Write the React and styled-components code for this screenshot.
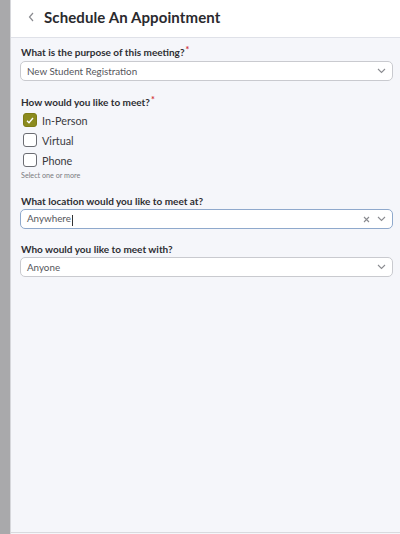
import React from "react";
import styled, { createGlobalStyle } from "styled-components";

const Global = createGlobalStyle`
  html, body { margin: 0; padding: 0; height: 100%; }
  body { font-family: Lato, "Open Sans", sans-serif; background: #f5f6fa; }
  #root { height: 100%; }
`;

const Page = styled.div`
  display: flex;
  height: 534px;
  width: 400px;
  overflow: hidden;
`;

const Strip = styled.div`
  width: 10px;
  flex: none;
  background: #a9a9ab;
  border-right: 1px solid #d6d7db;
`;

const Panel = styled.div`
  flex: 1;
  display: flex;
  flex-direction: column;
  background: #f5f6fa;
  border-bottom: 1px solid #d9dade;
  box-sizing: border-box;
  height: 533px;
`;

const Header = styled.div`
  height: 38px;
  box-sizing: border-box;
  background: #fff;
  border-bottom: 1px solid #dfe1e8;
  display: flex;
  align-items: center;
  padding: 0 0 3px 17px;
  gap: 9px;
`;

const Title = styled.h1`
  margin: 0;
  font-size: 15px;
  font-weight: 700;
  color: #2a2a2e;
  letter-spacing: 0.1px;
`;

const Body = styled.div`
  padding: 8px 7px 0 9px;
  display: flex;
  flex-direction: column;
`;

const Field = styled.div`
  display: flex;
  flex-direction: column;
  margin-bottom: ${(p) => p.$mb || 14}px;
`;

const Label = styled.div`
  font-size: 10px;
  font-weight: 700;
  color: #2e2e33;
  padding-left: 1px;
  margin-bottom: 2px;
  line-height: 12px;
`;

const Req = styled.span`
  color: #d2353a;
  font-size: 9px;
  position: relative;
  top: -3px;
  margin-left: 1px;
`;

const Box = styled.div`
  height: 20px;
  box-sizing: border-box;
  border: 1px solid ${(p) => (p.$focus ? "#8fa9cc" : "#c9cacf")};
  border-radius: 5px;
  background: #fff;
  display: flex;
  align-items: center;
  padding: 0 6px 0 6px;
  font-size: 9.8px;
  color: #55565b;
`;

const Value = styled.span`
  flex: 1;
`;

const Caret = styled.span`
  display: inline-block;
  width: 1px;
  height: 11px;
  background: #333;
  vertical-align: middle;
  margin-left: 1px;
`;

const Icons = styled.div`
  display: flex;
  align-items: center;
  gap: 7px;
`;

const Checks = styled.div`
  display: flex;
  flex-direction: column;
  gap: 6px;
  padding: 2px 0 0 3px;
`;

const CheckRow = styled.label`
  display: flex;
  align-items: center;
  gap: 5px;
  font-size: 10.8px;
  color: #3a3a3f;
  height: 14px;
`;

const Box14 = styled.span`
  width: 14px;
  height: 14px;
  box-sizing: border-box;
  border-radius: 3px;
  border: 1px solid ${(p) => (p.$on ? "#7e7d16" : "#6b6c72")};
  background: ${(p) => (p.$on ? "#8c8b1e" : "#fff")};
  display: flex;
  align-items: center;
  justify-content: center;
`;

const Hint = styled.div`
  font-size: 7.2px;
  line-height: 9px;
  color: #7a7b80;
  margin-top: 4px;
  padding-left: 1px;
`;

const Chevron = () => (
  <svg width="9" height="6" viewBox="0 0 9 6">
    <path d="M1 1l3.5 3.5L8 1" fill="none" stroke="#8a8b90" strokeWidth="1.1" />
  </svg>
);

const Clear = () => (
  <svg width="7" height="7" viewBox="0 0 7 7">
    <path d="M1 1l5 5M6 1L1 6" fill="none" stroke="#8a8b90" strokeWidth="1.1" />
  </svg>
);

const Check = ({ on, children }) => (
  <CheckRow>
    <Box14 $on={on}>
      {on && (
        <svg width="8" height="7" viewBox="0 0 8 7">
          <path d="M1 3.8l2 2L7 1" fill="none" stroke="#fff" strokeWidth="1.4" />
        </svg>
      )}
    </Box14>
    {children}
  </CheckRow>
);

export default function App() {
  return (
    <>
      <Global />
      <Page>
        <Strip />
        <Panel>
          <Header>
            <svg width="7" height="10" viewBox="0 0 7 10">
              <path d="M5 1L1.5 5 5 9" fill="none" stroke="#8a8b90" strokeWidth="1.2" />
            </svg>
            <Title>Schedule An Appointment</Title>
          </Header>
          <Body>
            <Field $mb={15}>
              <Label>
                What is the purpose of this meeting?<Req>*</Req>
              </Label>
              <Box>
                <Value>New Student Registration</Value>
                <Chevron />
              </Box>
            </Field>
            <Field $mb={15}>
              <Label>
                How would you like to meet?<Req>*</Req>
              </Label>
              <Checks>
                <Check on>In-Person</Check>
                <Check>Virtual</Check>
                <Check>Phone</Check>
              </Checks>
              <Hint>Select one or more</Hint>
            </Field>
            <Field $mb={14}>
              <Label>What location would you like to meet at?</Label>
              <Box $focus>
                <Value>
                  Anywhere<Caret />
                </Value>
                <Icons>
                  <Clear />
                  <Chevron />
                </Icons>
              </Box>
            </Field>
            <Field>
              <Label>Who would you like to meet with?</Label>
              <Box>
                <Value>Anyone</Value>
                <Chevron />
              </Box>
            </Field>
          </Body>
        </Panel>
      </Page>
    </>
  );
}
